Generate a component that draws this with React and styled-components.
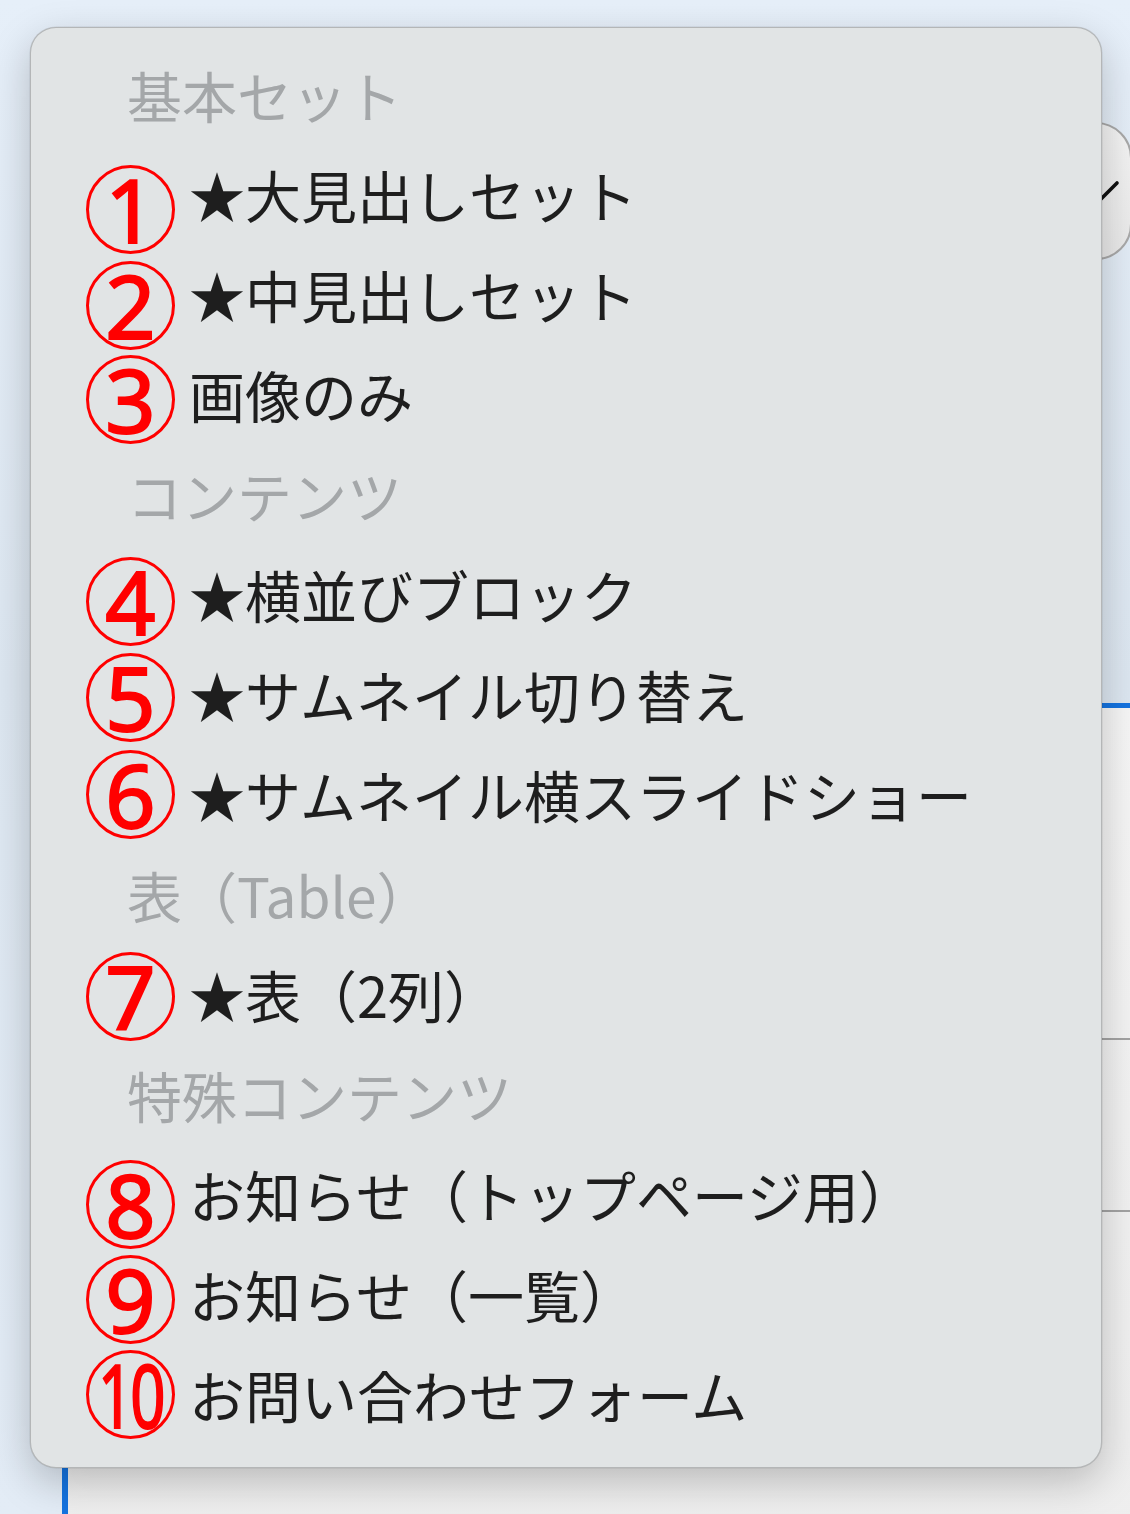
import React from 'react'
import styled, { createGlobalStyle } from 'styled-components'

const menu = [
  { header: '基本セット' },
  { n: '1', label: '★大見出しセット', dy: 15 },
  { n: '2', label: '★中見出しセット', dy: 11 },
  { n: '3', label: '画像のみ', dy: 5 },
  { header: 'コンテンツ' },
  { n: '4', label: '★横並びブロック', dy: 7 },
  { n: '5', label: '★サムネイル切り替え', dy: 3 },
  { n: '6', label: '★サムネイル横スライドショー', dy: 0 },
  { header: '表（Table）' },
  { n: '7', label: '★表（2列）', dy: 2 },
  { header: '特殊コンテンツ' },
  { n: '8', label: 'お知らせ（トップページ用）', dy: 10 },
  { n: '9', label: 'お知らせ（一覧）', dy: 5 },
  { n: '10', label: 'お問い合わせフォーム', dy: 0 },
]

const App = () => {
  return (
    <Page>
      <Global />
      <Backdrop>
        <TopBar>
          <Pill>
            <svg width="32" height="24" viewBox="0 0 32 24">
              <polyline points="3,12 13,20 29,4" fill="none" stroke="#111" strokeWidth="3.6" strokeLinecap="round" strokeLinejoin="round" />
            </svg>
          </Pill>
        </TopBar>
        <Editor>
          <EditorRow $h={330} />
          <EditorRow $h={170} />
          <EditorRow $h={320} $last />
        </Editor>
      </Backdrop>

      <Menu>
        {menu.map((m, i) =>
          m.header ? (
            <Header key={i}>{m.header}</Header>
          ) : (
            <Item key={i}>
              <Badge $dy={m.dy}>
                <Digit $narrow={m.n.length > 1}>{m.n}</Digit>
              </Badge>
              <Label>{m.label}</Label>
            </Item>
          )
        )}
      </Menu>
    </Page>
  )
}

export default App

const Global = createGlobalStyle`
  html, body {
    margin: 0;
    padding: 0;
  }
  body {
    font-family: "Noto Sans CJK JP", "Noto Sans", sans-serif;
  }
`

const Page = styled.div`
  position: relative;
  width: 1130px;
  height: 1514px;
  overflow: hidden;
  background: linear-gradient(180deg, #e6eff9 0%, #dde7f1 45%, #e3ecf6 100%);
`

const Backdrop = styled.div`
  display: flex;
  flex-direction: column;
`

const TopBar = styled.div`
  display: flex;
  justify-content: flex-end;
  padding-top: 122px;
`

const Pill = styled.div`
  width: 140px;
  height: 138px;
  box-sizing: border-box;
  display: flex;
  align-items: center;
  justify-content: flex-end;
  padding-right: 10px;
  background: linear-gradient(180deg, #f4f4f4, #e9e9e9);
  border: 2px solid #a9a9a9;
  border-radius: 36px;
  margin-right: -2px;
`

const Editor = styled.div`
  margin-top: 443px;
  margin-left: 62px;
  margin-right: -20px;
  border-top: 5px solid #1473e0;
  border-left: 6px solid #1473e0;
  background: linear-gradient(180deg, #f6f6f6, #eeeeee);
  display: flex;
  flex-direction: column;
`

const EditorRow = styled.div`
  height: ${p => p.$h}px;
  border-bottom: ${p => (p.$last ? 'none' : '2px solid #a3a3a3')};
`

const Menu = styled.div`
  position: absolute;
  left: 30px;
  top: 27px;
  width: 1072px;
  height: 1441px;
  box-sizing: border-box;
  padding: 16px 0 0 96px;
  background: #e1e4e5;
  border: 1.5px solid rgba(0, 0, 0, 0.2);
  border-radius: 26px;
  box-shadow: 0 14px 40px rgba(0, 0, 0, 0.22), 0 0 0 0.5px rgba(0, 0, 0, 0.1);
  display: flex;
  flex-direction: column;
`

const Header = styled.div`
  height: 100px;
  line-height: 100px;
  font-size: 55px;
  color: #a4a7a9;
  white-space: nowrap;
`

const Item = styled.div`
  height: 100px;
  display: flex;
  align-items: center;
  gap: 14px;
  margin-left: -41px;
`

const Badge = styled.div`
  flex: none;
  width: 89px;
  height: 89px;
  box-sizing: border-box;
  border: 3.5px solid #ff0000;
  border-radius: 50%;
  display: flex;
  align-items: center;
  justify-content: center;
  transform: translateY(${p => p.$dy}px);
`

const Digit = styled.span`
  font-family: "Noto Sans", "Liberation Sans", sans-serif;
  font-weight: 400;
  font-size: 88px;
  line-height: 64px;
  height: 64px;
  color: #ff0000;
  -webkit-text-stroke: 2px #ff0000;
  display: inline-block;
  transform: ${p => (p.$narrow ? 'scaleX(0.7)' : 'none')};
  letter-spacing: ${p => (p.$narrow ? '-4px' : '0')};
`

const Label = styled.div`
  font-size: 56px;
  color: #1e1e1e;
  white-space: nowrap;
  line-height: 100px;
`
